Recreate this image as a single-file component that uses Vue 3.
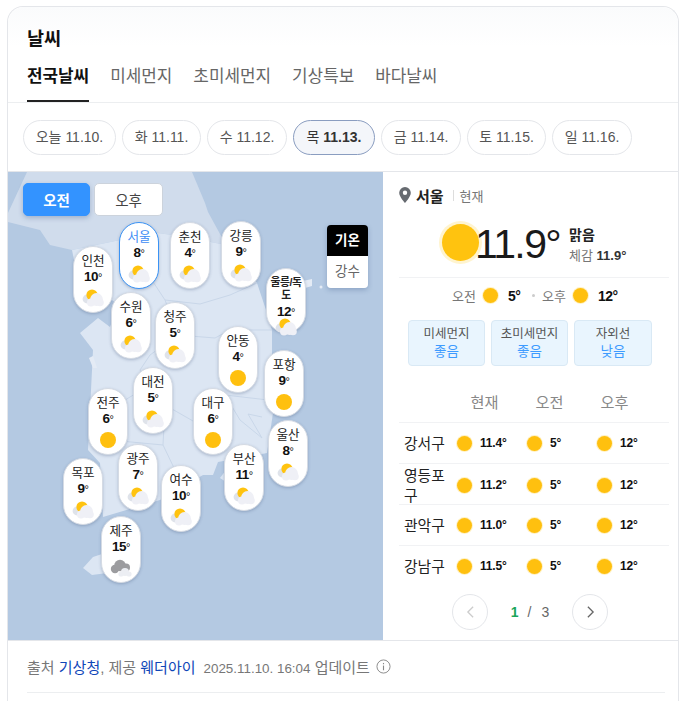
<script setup>
const days = [
  { d: '오늘', n: '11.10.', w: 93 }, { d: '화', n: '11.11.', w: 79 }, { d: '수', n: '11.12.', w: 80 },
  { d: '목', n: '11.13.', w: 82, on: true }, { d: '금', n: '11.14.', w: 80 }, { d: '토', n: '11.15.', w: 79 }, { d: '일', n: '11.16.', w: 80 }
]
const tabs = ['전국날씨', '미세먼지', '초미세먼지', '기상특보', '바다날씨']
const pins = [
  { n: '인천', t: 10, x: 73, y: 246, i: 'p' }, { n: '서울', t: 8, x: 119, y: 222, i: 'p', on: true },
  { n: '춘천', t: 4, x: 170, y: 222, i: 'p' }, { n: '강릉', t: 9, x: 221, y: 221, i: 'p' },
  { n: '울릉/독도', t: 12, x: 266, y: 268, i: 'p', small: true }, { n: '수원', t: 6, x: 111, y: 292, i: 'p' },
  { n: '청주', t: 5, x: 155, y: 302, i: 'p' }, { n: '안동', t: 4, x: 218, y: 326, i: 's' },
  { n: '포항', t: 9, x: 264, y: 350, i: 's' }, { n: '대전', t: 5, x: 133, y: 367, i: 'p' },
  { n: '전주', t: 6, x: 88, y: 388, i: 's' }, { n: '대구', t: 6, x: 193, y: 388, i: 's' },
  { n: '울산', t: 8, x: 268, y: 420, i: 'p' }, { n: '부산', t: 11, x: 224, y: 444, i: 'p' },
  { n: '광주', t: 7, x: 118, y: 444, i: 'p' }, { n: '여수', t: 10, x: 161, y: 465, i: 'p' },
  { n: '목포', t: 9, x: 63, y: 458, i: 'p' }, { n: '제주', t: 15, x: 101, y: 516, i: 'c' }
]
const pinStyle = (p) => ({ left: p.x - 8 + 'px', top: p.y - 172 + 'px' })
const air = [['미세먼지', '좋음'], ['초미세먼지', '좋음'], ['자외선', '낮음']]
const rows = [
  { n: '강서구', t: '11.4' }, { n: '영등포구', t: '11.2', tall: true },
  { n: '관악구', t: '11.0' }, { n: '강남구', t: '11.5' }
]
</script>

<template>
  <div class="page">
    <section class="card">
      <header class="head">
        <h2 class="title">날씨</h2>
        <nav class="tabs">
          <span v-for="(t, i) in tabs" :key="t" class="tab" :class="{ active: i === 0 }">{{ t }}</span>
        </nav>
      </header>
      <div class="days">
        <span v-for="d in days" :key="d.n" class="day" :class="{ on: d.on }" :style="{ width: d.w + 'px' }">
          <span class="dn">{{ d.d }}</span> <span class="dd">{{ d.n }}</span>
        </span>
      </div>
      <div class="main">
        <div class="map">
          <svg class="land" viewBox="8 172 375 468" width="375" height="468">
            <polygon fill="#d0dcec" points="27,172 192,172 205,203 208,212 226,245 180,236 150,232 120,240 72,250 50,245 40,230 8,222 8,213" />
            <polygon fill="#dce6f3" points="72,250 120,240 150,232 180,236 226,245 257,283 266,310 272,330 272,370 273,413 267,453 218,462 213,475 203,475 160,500 103,517 100,463 88,450 93,350 80,333 98,318 110,327 118,305 100,290 78,280" />
            <polygon fill="#dce6f3" points="83,568 93,557 102,554 125,552 130,570 92,575" />
            <polygon fill="#dce6f3" points="220,478 226,470 236,478 226,482" />
            <polygon fill="#e4ebf5" points="89,358 93,356 97,368 93,368" />
            <polygon fill="#e4ebf5" points="303,281 312,279 312,286 305,288" />
            <circle fill="#e4ebf5" cx="321" cy="287" r="1.5" />
            <g fill="none" stroke="#c9d7e9" stroke-width="1">
              <polyline points="150,232 140,262 165,300 200,304 230,295 257,283" />
              <polyline points="165,300 178,335 150,355 140,370 150,385 125,400 100,400" />
              <polyline points="178,335 215,338 230,330 272,330" />
              <polyline points="165,405 200,425 225,395 268,400 273,413" />
              <polyline points="165,405 163,445 175,470" />
              <polyline points="110,440 163,445" />
              <polyline points="225,395 240,420 262,438" />
              <polyline points="262,417 248,414 262,438" />
            </g>
          </svg>

          <div class="ampm">
            <button class="ap on">오전</button>
            <button class="ap">오후</button>
          </div>
          <div class="kind">
            <span class="k on">기온</span>
            <span class="k">강수</span>
          </div>

          <div v-for="p in pins" :key="p.n" class="pin" :class="{ on: p.on, small: p.small }" :style="pinStyle(p)">
            <div class="pn">{{ p.n }}</div>
            <div class="pt">{{ p.t }}<i>°</i></div>
            <svg v-if="p.i === 'p'" class="pi" viewBox="0 0 22 18" width="22" height="18">
              <circle cx="5" cy="10" r="4.4" fill="#dfe3ea" />
              <circle cx="10" cy="6" r="5.6" fill="#ffc30f" />
              <circle cx="14.5" cy="10.5" r="6.4" fill="#eff0f6" />
              <circle cx="9" cy="13.4" r="4" fill="#eff0f6" />
              <circle cx="18" cy="13.5" r="3.8" fill="#eff0f6" />
            </svg>
            <svg v-else-if="p.i === 's'" class="pi" viewBox="0 0 22 18" width="22" height="18">
              <circle cx="11" cy="9" r="8" fill="#ffc00f" />
            </svg>
            <svg v-else class="pi" viewBox="0 0 22 18" width="22" height="18">
              <circle cx="5" cy="10" r="4.2" fill="#9c9c9f" />
              <circle cx="10" cy="6.5" r="5.8" fill="#9c9c9f" />
              <circle cx="16" cy="8.5" r="4" fill="#9c9c9f" />
              <circle cx="15" cy="13" r="4" fill="#eceef3" />
              <circle cx="11" cy="15" r="2.6" fill="#eceef3" />
              <circle cx="19" cy="15" r="2.6" fill="#eceef3" />
            </svg>
          </div>
        </div>

        <aside class="side">
          <div class="loc">
            <svg viewBox="0 0 12 16" width="12" height="16"><path fill-rule="evenodd" fill="#666a70" d="M6 0a5.8 5.8 0 0 0-5.8 5.8C.2 10 6 16 6 16s5.8-6 5.8-10.2A5.8 5.8 0 0 0 6 0zm0 7.9a2.2 2.2 0 1 1 0-4.4 2.2 2.2 0 0 1 0 4.4z" /></svg>
            <strong>서울</strong><em class="bar"></em><span>현재</span>
          </div>
          <div class="now">
            <span class="bigsun"></span>
            <span class="bigt">11.9°</span>
            <div class="nowtx">
              <strong>맑음</strong>
              <div><span>체감</span> <b>11.9°</b></div>
            </div>
          </div>
          <div class="ampmrow">
            <span class="lbl">오전</span><span class="sun"></span><b class="v1">5°</b>
            <span class="sep"></span>
            <span class="lbl">오후</span><span class="sun"></span><b class="v1">12°</b>
          </div>
          <div class="air">
            <div v-for="a in air" :key="a[0]" class="ab">
              <div>{{ a[0] }}</div>
              <div class="av">{{ a[1] }}</div>
            </div>
          </div>
          <div class="thead"><span>현재</span><span>오전</span><span>오후</span></div>
          <div v-for="r in rows" :key="r.n" class="trow">
            <span class="tn">{{ r.n }}</span>
            <span class="cell"><span class="sun"></span><b>{{ r.t }}°</b></span>
            <span class="cell"><span class="sun"></span><b>5°</b></span>
            <span class="cell"><span class="sun"></span><b>12°</b></span>
          </div>
          <div class="pager">
            <span class="pb off"><svg viewBox="0 0 10 16" width="9" height="14"><path d="M8 2L2 8l6 6" fill="none" stroke="#ccc" stroke-width="1.5" /></svg></span>
            <span class="pc"><b>1</b><i>/</i><span>3</span></span>
            <span class="pb"><svg viewBox="0 0 10 16" width="9" height="14"><path d="M2 2l6 6-6 6" fill="none" stroke="#666" stroke-width="1.5" /></svg></span>
          </div>
        </aside>
      </div>
      <footer class="foot">
        <div class="src">
          <span>출처 <a>기상청</a>, 제공 <a>웨더아이</a></span>
          <span class="upd"><span class="num">2025.11.10. 16:04</span> 업데이트</span>
          <svg viewBox="0 0 16 16" width="15" height="15"><circle cx="8" cy="8" r="7" fill="none" stroke="#888" /><rect x="7.4" y="7" width="1.2" height="5" fill="#888" /><rect x="7.4" y="4.2" width="1.2" height="1.4" fill="#888" /></svg>
        </div>
      </footer>
    </section>
  </div>
</template>

<style>
html, body { margin: 0; height: 701px; overflow: hidden; background: #fff; }
</style>

<style scoped>
.page { box-sizing: border-box; height: 701px; overflow: hidden; padding: 6px 6px 0 7px; font-family: "Liberation Sans", "Noto Sans CJK KR", sans-serif; color: #111; }
.card { box-sizing: border-box; height: 695px; width: 672px; border: 1px solid #e4e6ea; border-bottom: 0; border-radius: 16px 16px 0 0; background: #fff; }
.head { height: 95px; padding: 0 19px; border-bottom: 1px solid #eceef0; border-radius: 16px 16px 0 0; background: linear-gradient(#fafbfc, #fff 40px); }
.title { margin: 0; padding-top: 21px; font-size: 18.5px; line-height: 22px; font-weight: 700; color: #111; }
.tabs { display: flex; gap: 21px; margin-top: 17px; }
.tab { font-size: 16.9px; line-height: 20px; height: 35px; box-sizing: border-box; color: #666; white-space: nowrap; }
.tab.active { color: #111; font-weight: 700; border-bottom: 2px solid #222; }
.days { display: flex; gap: 6px; padding: 17px 0 16px 15px; height: 35px; border-bottom: 1px solid #e4e6ea; }
.day { box-sizing: border-box; height: 35px; border: 1px solid #e4e6ea; border-radius: 18px; font-size: 14px; line-height: 33px; text-align: center; color: #555; white-space: nowrap; }
.day.on { background: #f4f6fa; border-color: #8a9dc0; color: #333; }
.day.on .dd { font-weight: 700; }
.main { display: flex; height: 468px; border-bottom: 1px solid #e4e6ea; }
.map { position: relative; width: 375px; height: 468px; background: #b4c9e2; overflow: hidden; flex: none; }
.land { position: absolute; left: 0; top: 0; }
.ampm { position: absolute; left: 15px; top: 11px; display: flex; gap: 4px; }
.ap { width: 69px; height: 33px; box-sizing: border-box; border: 1px solid #ccd3dc; border-radius: 5px; background: #fff; color: #444; font: 14.5px "Liberation Sans", "Noto Sans CJK KR", sans-serif; padding: 0; }
.ap.on { width: 67px; background: #3393ff; border-color: #3393ff; color: #fff; font-weight: 700; box-shadow: 0 2px 5px rgba(50, 80, 130, .3); }
.kind { position: absolute; left: 319px; top: 53px; width: 41px; border-radius: 4px; overflow: hidden; box-shadow: 0 2px 5px rgba(50, 80, 130, .3); }
.k { display: block; height: 32px; background: #fff; color: #666; font-size: 13.5px; line-height: 31px; text-align: center; }
.k.on { background: #000; color: #fff; font-weight: 700; height: 31px; }
.pin { position: absolute; width: 40px; height: 67px; box-sizing: border-box; background: #fff; border-radius: 20px; border: 1px solid #d5dbe4; box-shadow: 0 1px 3px rgba(60, 80, 120, .3); text-align: center; padding-top: 6px; }
.pin.on { border: 1px solid #3a93f5; }
.pn { font-size: 12.6px; line-height: 17px; color: #222; }
.pin.on .pn { color: #3d8df5; }
.pin.small { height: 65px; padding-top: 7px; }
.pin.small .pn { font-size: 10.8px; line-height: 13px; width: 38px; word-break: break-all; font-weight: 700; letter-spacing: -.4px; }
.pt { font-size: 13.5px; line-height: 16px; font-weight: 700; margin-top: -1px; letter-spacing: -.5px; color: #111; }
.pt i { font-style: normal; font-size: 11px; font-weight: 400; }
.pin.small .pt { margin-top: 2px; }
.pi { display: block; margin: 4px auto 0; }
.pin.small .pi { margin-top: -2px; }
.side { width: 295px; box-sizing: border-box; padding: 12px 15px 0 22px; background: #fff; flex: none; }
.loc { display: flex; align-items: center; height: 22px; margin-left: -6px; font-size: 13px; color: #777; }
.loc strong { font-size: 15px; color: #222; margin-left: 5px; }
.bar { display: inline-block; width: 1px; height: 11px; background: #ddd; margin: 0 6px 0 9px; }
.now { position: relative; height: 52px; margin-top: 11px; }
.bigsun { position: absolute; left: 37px; top: 7px; width: 37px; height: 37px; border-radius: 50%; background: #ffc30f; box-shadow: 0 0 0 3px #fff4cf; }
.bigt { position: absolute; left: 70px; top: 4px; font-size: 41px; line-height: 46px; letter-spacing: -1.6px; color: #1a1a1a; white-space: nowrap; }
.nowtx { position: absolute; left: 164px; top: 8px; font-size: 13px; color: #777; white-space: nowrap; }
.nowtx strong { display: block; color: #222; font-size: 14px; line-height: 21px; }
.nowtx div { line-height: 19px; }
.nowtx b { color: #333; }
.ampmrow { display: flex; align-items: center; justify-content: center; height: 36px; margin: 8px -6px 0; border-top: 1px solid #f1f2f4; font-size: 13px; color: #777; padding-left: 1px; box-sizing: border-box; }
.sun { display: inline-block; width: 15px; height: 15px; border-radius: 50%; background: #ffc00f; box-shadow: 0 0 0 1px #fff1c4; flex: none; }
.ampmrow .sun { margin: 0 0 0 7px; }
.v1 { color: #111; font-size: 14px; margin-left: 10px; width: 19px; letter-spacing: -.5px; }
.sep { width: 3px; height: 3px; border-radius: 50%; background: #ccc; margin: 0 7px 0 5px; }
.air { display: flex; gap: 6px; margin: 7px 0 0 3px; }
.ab { width: 77px; height: 46px; box-sizing: border-box; background: #e9f5fe; border: 1px solid #d9e9f5; border-radius: 4px; font-size: 12.5px; line-height: 18px; padding-top: 4px; color: #555; text-align: center; white-space: nowrap; }
.ab:last-child { width: 78px; }
.av { color: #3d9bff; font-size: 13.5px; }
.thead { display: grid; grid-template-columns: 65px 65px 65px; justify-content: end; margin: 25px 0 0 -1px; padding-right: 16px; font-size: 15.2px; line-height: 24px; color: #888; height: 31px; text-align: center; }
.trow { display: grid; grid-template-columns: 50px 70px 70px 70px; align-items: center; height: 41px; box-sizing: border-box; margin: 0 -6px; border-top: 1px solid #f1f2f4; font-size: 12px; padding-left: 5px; }
.trow:last-of-type { height: 42px; border-bottom: 1px solid #f1f2f4; }
.tn { font-size: 14.8px; line-height: 20px; color: #222; width: 44px; margin-top: 2px; word-break: break-all; }
.cell { display: flex; align-items: center; gap: 8px; padding-left: 3px; }
.cell b { font-size: 12px; color: #111; letter-spacing: -.2px; }
.pager { display: flex; align-items: center; justify-content: center; margin-top: 8px; padding-right: 8px; }
.pb { width: 36px; height: 36px; box-sizing: border-box; border: 1px solid #e4e6ea; border-radius: 50%; display: flex; align-items: center; justify-content: center; background: #fff; }
.pc { width: 84px; text-align: center; font-size: 14px; color: #666; }
.pc b { color: #1aa55a; }
.pc i { font-style: normal; margin: 0 10px 0 9px; }
.foot { padding: 0 13px 0 19px; height: 60px; }
.src { display: flex; align-items: center; gap: 8px; height: 51px; border-bottom: 1px solid #eceef0; font-size: 15px; color: #777; white-space: nowrap; }
.src a { color: #0f46b8; }
.num { font-size: 13.4px; }
.src svg { margin-left: -2px; }
</style>
